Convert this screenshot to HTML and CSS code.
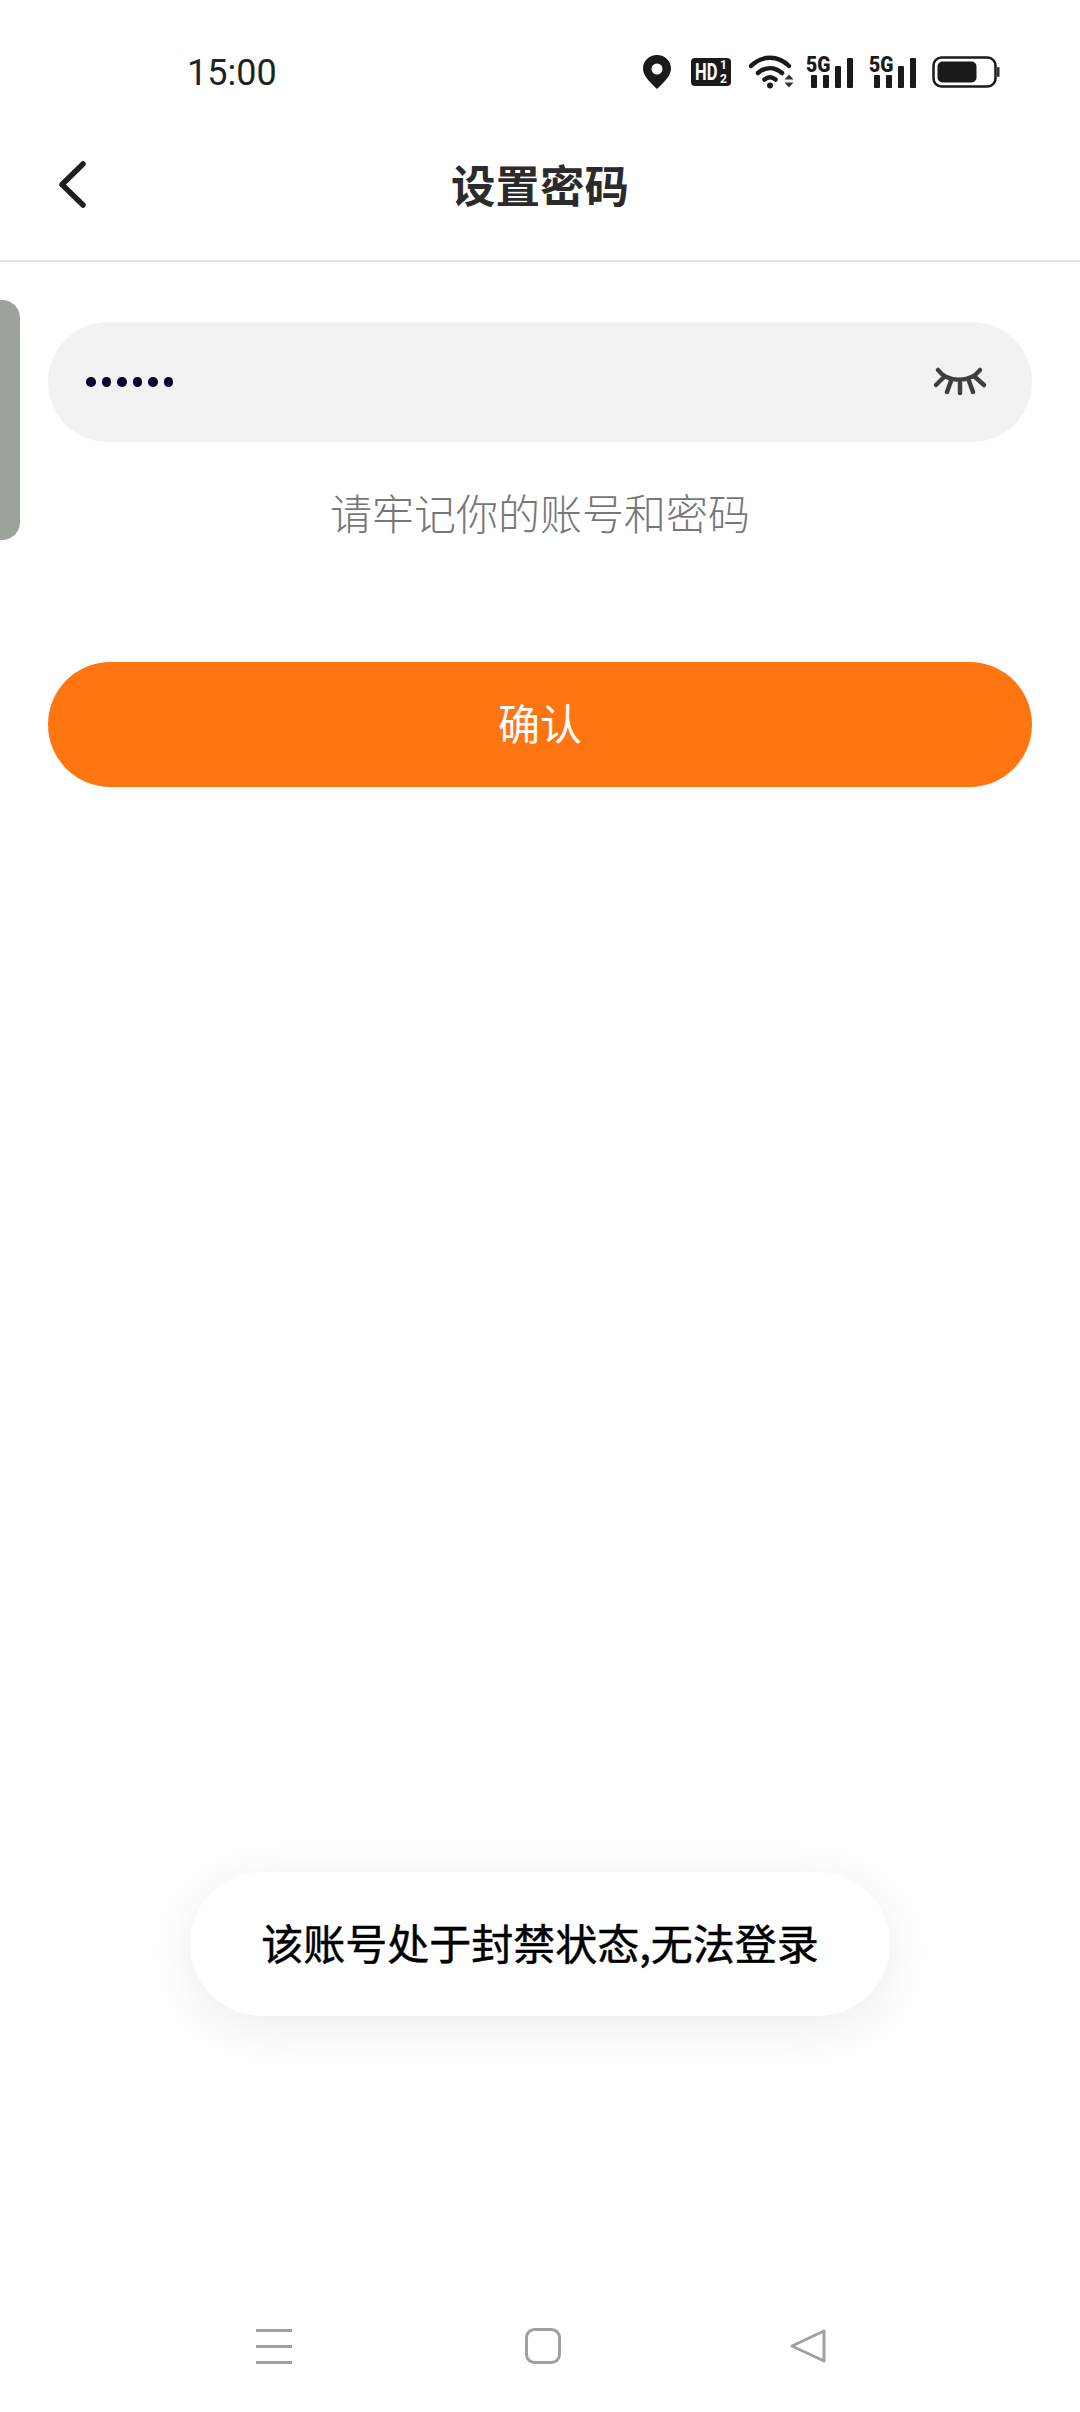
FILE: index.html
```html
<!DOCTYPE html>
<html lang="zh-CN">
<head>
<meta charset="utf-8">
<title>设置密码</title>
<link rel="stylesheet" href="styles.css">
</head>
<body>
<div class="page">
  <div class="status">
    <span class="time">15:00</span>
    <div class="status-icons">
      <svg class="ic-pin" width="28" height="34" viewBox="0 0 28 34"><path fill-rule="evenodd" fill="#1a1a1a" d="M14 0C6 0 0 6 0 13.6c0 7 6 13 14 20.4 8-7.400 14-13.400 14-20.400C28 6 22 0 14 0zm0 8.500a5.500 5.500 0 1 1 0 11 5.500 5.500 0 0 1 0-11z"/></svg>
      <svg class="ic-hd" width="40" height="28" viewBox="0 0 40 28"><rect width="40" height="28" rx="4" fill="#1a1a1a"/><text transform="translate(4 22) scale(.72 1)" class="svg-hd">HD</text><text x="29" y="11" class="svg-sub">1</text><text x="29" y="25" class="svg-sub">2</text></svg>
      <svg class="ic-wifi" width="46" height="36" viewBox="0 0 46 36"><g fill="none" stroke="#1a1a1a" stroke-width="4.500" stroke-linecap="round"><path d="M2 12C13 1 29 1 40 12"/><path d="M9 19c7.500-6.500 16.500-6.500 24 0"/><path d="M15.500 25.500c3.500-2.800 7.500-2.800 11 0"/></g><circle cx="21" cy="31.500" r="3" fill="#1a1a1a"/><path fill="#333" d="M35.500 25.500l4.500-5 4.500 5zM35.500 28.500h9l-4.500 5z"/></svg>
      <svg class="ic-sig" width="48" height="42" viewBox="0 -4 48 42"><text transform="translate(0 17) scale(.88 1)" class="svg-5g">5G</text><g fill="#1a1a1a"><rect x="5" y="20" width="6" height="13" rx="1"/><rect x="17" y="20" width="6" height="13" rx="1"/><rect x="29" y="11" width="6" height="22" rx="1"/><rect x="41" y="3" width="6" height="30" rx="1"/></g></svg>
      <svg class="ic-sig" width="48" height="42" viewBox="0 -4 48 42"><text transform="translate(0 17) scale(.88 1)" class="svg-5g">5G</text><g fill="#1a1a1a"><rect x="5" y="20" width="6" height="13" rx="1"/><rect x="17" y="20" width="6" height="13" rx="1"/><rect x="29" y="11" width="6" height="22" rx="1"/><rect x="41" y="3" width="6" height="30" rx="1"/></g></svg>
      <svg class="ic-bat" width="68" height="32" viewBox="0 0 68 32"><rect x="1.500" y="1.500" width="62" height="29" rx="8" fill="none" stroke="#1a1a1a" stroke-width="2.500"/><rect x="5.500" y="5.500" width="39" height="21" rx="5" fill="#1a1a1a"/><rect x="65" y="11" width="2.500" height="10" rx="1" fill="#333"/></svg>
    </div>
  </div>

  <header class="topbar">
    <svg class="back" width="32" height="48" viewBox="0 0 32 48"><path d="M27 4L6 24.500 27 45" fill="none" stroke="#1f1f1f" stroke-width="5.500" stroke-linecap="round" stroke-linejoin="round"/></svg>
    <h1 class="title">设置密码</h1>
  </header>

  <div class="side-handle"></div>

  <main class="form">
    <div class="field">
      <div class="dots"><i></i><i></i><i></i><i></i><i></i><i></i></div>
      <svg class="eye" width="60" height="36" viewBox="0 0 60 36"><g fill="none" stroke="#3f3f3f" stroke-width="4.500" stroke-linecap="round"><path d="M9 4C19 17 41 17 51 4"/><path d="M15 11L7 19"/><path d="M22 15L18 26"/><path d="M31 17V27"/><path d="M40 15L44 26"/><path d="M46 11L55 19"/></g></svg>
    </div>
    <p class="hint">请牢记你的账号和密码</p>
    <button class="confirm" type="button">确认</button>
  </main>

  <div class="toast">该账号处于封禁状态,无法登录</div>

  <nav class="navbar">
    <svg width="36" height="36" viewBox="0 0 36 36"><g fill="#a0a0a0"><rect y="1" width="36" height="3"/><rect y="17" width="36" height="3"/><rect y="33" width="36" height="3"/></g></svg>
    <svg width="36" height="36" viewBox="0 0 36 36"><rect x="1.500" y="1.500" width="33" height="33" rx="8" fill="none" stroke="#a0a0a0" stroke-width="3"/></svg>
    <svg class="nav-back" width="36" height="36" viewBox="0 0 36 36"><path d="M34 3L2 18l32 15z" fill="none" stroke="#a0a0a0" stroke-width="3" stroke-linejoin="round"/></svg>
  </nav>
</div>
</body>
</html>
```
FILE: styles.css
```css
* { box-sizing: border-box; }
html, body { margin: 0; padding: 0; background: #fff; }
body { font-family: "Noto Sans CJK SC", "Roboto", sans-serif; }

.page {
  position: relative;
  width: 1080px;
  height: 2412px;
  display: flex;
  flex-direction: column;
  overflow: hidden;
  background: #fff;
}

.status {
  height: 112px;
  padding: 32px 80px 0 187px;
  display: flex;
  align-items: center;
  justify-content: space-between;
  flex: none;
}
.time {
  font-family: "Roboto", sans-serif;
  font-size: 36px;
  color: #222;
  padding-top: 2px;
}
.status-icons { display: flex; align-items: center; }
.ic-pin { margin-right: 20px; }
.ic-hd { margin-right: 18px; }
.ic-wifi { margin-right: 11px; }
.ic-sig { margin-right: 15px; }
.svg-hd { font: 700 23px "Roboto", sans-serif; fill: #fff; }
.svg-sub { font: 700 12px "Roboto", sans-serif; fill: #fff; }
.svg-5g { font: 900 22px "Roboto", sans-serif; fill: #1a1a1a; }

.topbar {
  height: 150px;
  position: relative;
  flex: none;
  display: flex;
  align-items: center;
  justify-content: center;
  border-bottom: 2px solid #e2e2e2;
  padding-bottom: 6px;
}
.back { position: absolute; left: 56px; top: 48px; }
.title {
  margin: 0;
  font-size: 44.500px;
  font-weight: 700;
  color: #2b2b2b;
}

.side-handle {
  position: absolute;
  left: 0;
  top: 300px;
  width: 20px;
  height: 240px;
  background: #9ca39b;
  border-radius: 0 18px 18px 0;
}

.form {
  flex: 1;
  padding: 60px 48px 0;
  display: flex;
  flex-direction: column;
}
.field {
  height: 120px;
  border-radius: 60px;
  background: #f2f2f3;
  display: flex;
  align-items: center;
  justify-content: space-between;
  padding: 0 43px 0 38px;
}
.dots { display: flex; gap: 6px; }
.dots i { width: 9.500px; height: 9.500px; border-radius: 50%; background: #05052e; }
.eye { margin-top: 4px; }
.hint {
  margin: 45px 0 0;
  height: 50px;
  line-height: 50px;
  text-align: center;
  font-size: 42px;
  font-weight: 300;
  color: #777;
}
.confirm {
  margin-top: 125px;
  height: 125px;
  border: 0;
  border-radius: 63px;
  background: #ff7511;
  color: #fff;
  font-family: inherit;
  font-size: 42px;
  padding: 0 0 6px;
}

.toast {
  position: absolute;
  left: 190px;
  top: 1872px;
  width: 700px;
  height: 144px;
  padding-bottom: 6px;
  border-radius: 72px;
  background: #fff;
  box-shadow: 0 10px 56px rgba(0, 0, 0, 0.08);
  display: flex;
  align-items: center;
  justify-content: center;
  font-size: 42px;
  -webkit-text-stroke: 0.5px #000;
  color: #000;
}

.navbar {
  flex: none;
  height: 84px;
  padding-left: 256px;
  display: flex;
  gap: 233px;
  align-items: flex-start;
}
.nav-back { margin-left: -4px; }
```
